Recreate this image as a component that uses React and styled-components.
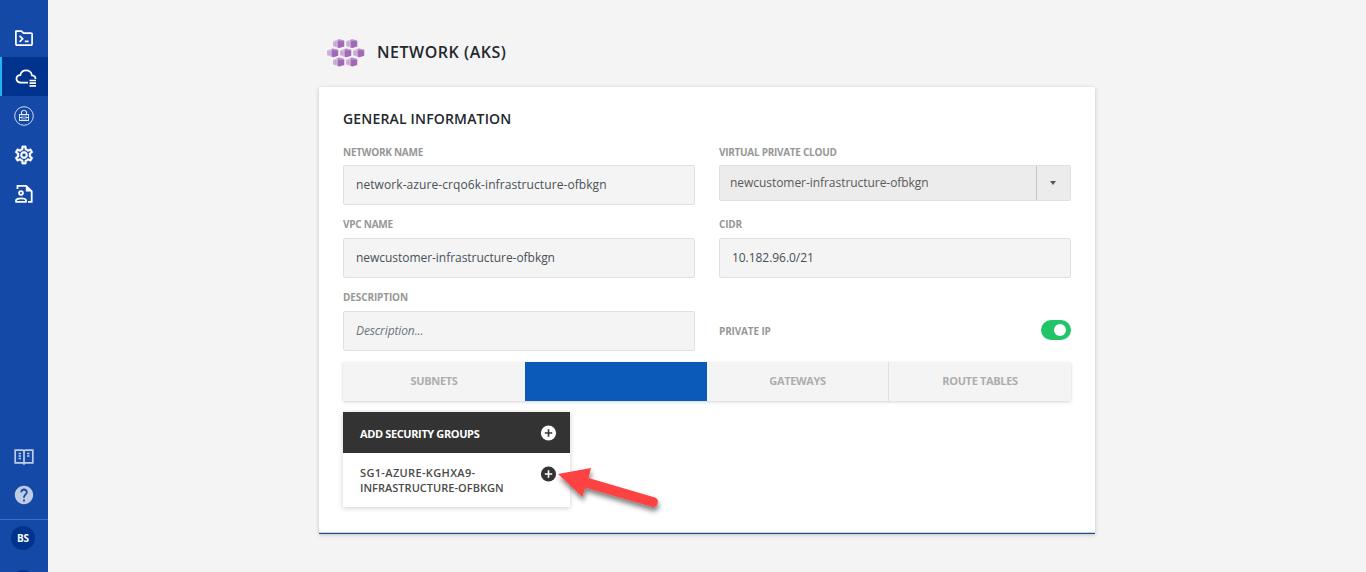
import React from "react";
import styled, { createGlobalStyle } from "styled-components";
import { MdHelp, MdOutlineSettings } from "react-icons/md";

const GlobalStyle = createGlobalStyle`
  * { box-sizing: border-box; }
  body {
    margin: 0;
    overflow: hidden;
    background: #f4f4f4;
    font-family: "Open Sans", "Noto Sans", sans-serif;
  }
`;

const Page = styled.div`
  display: flex;
  height: 572px;
  overflow: hidden;
`;

const Sidebar = styled.nav`
  width: 48px;
  flex: none;
  display: flex;
  flex-direction: column;
  padding-top: 18px;
  background: #1549a8;
  color: #fff;
`;

const NavItem = styled.div`
  height: ${(p) => p.$height || 39}px;
  flex: none;
  display: flex;
  align-items: center;
  justify-content: center;
  background: ${(p) => (p.$active ? "#00338d" : "transparent")};
  border-left: ${(p) => (p.$active ? "2px solid #22b5f5" : "0")};
  padding: ${(p) => (p.$active ? "2px 0 0 2px" : "0")};
  svg { display: block; opacity: ${(p) => (p.$dim ? 0.72 : 1)}; }
`;

const GearIcon = styled(MdOutlineSettings)`
  path:not([fill="none"]) {
    stroke: #fff;
    stroke-width: 0.4px;
  }
`;

const NavBottom = styled.div`
  margin-top: 225px;
  flex: none;
`;

const Account = styled.div`
  margin-top: 5px;
  border-top: 1px solid #3a6fc4;
  padding: 6px 0 0 11px;
  display: flex;
  flex-direction: column;
  gap: 20px;
`;

const Avatar = styled.div`
  width: 24px;
  height: 24px;
  border-radius: 50%;
  background: #00338d;
  font-size: 10px;
  line-height: 24px;
  font-weight: 700;
  letter-spacing: -0.2px;
  text-align: center;
`;

const Main = styled.main`
  width: 776px;
  margin-left: 271px;
  flex: none;
`;

const Header = styled.header`
  display: flex;
  align-items: center;
  gap: 12px;
  height: 87px;
  padding: 18px 0 0 8px;
`;

const Text = styled.span`
  display: block;
  white-space: nowrap;
  letter-spacing: ${(p) => p.$track || 0}px;
`;

const Title = styled(Text)`
  font-size: 16px;
  line-height: 20px;
  font-weight: 600;
  color: #23282d;
  padding-bottom: 2px;
`;

const Card = styled.section`
  height: 447px;
  background: #fff;
  padding: 24px 24px 0;
  border-bottom: 1px solid #134f9c;
  box-shadow: inset 0 -1px 0 #d0d0d0, 0 1px 4px rgba(0, 0, 0, 0.2);
`;

const SectionTitle = styled(Text)`
  font-size: 14px;
  line-height: 16px;
  font-weight: 600;
  color: #23282d;
`;

const Fields = styled.div`
  display: grid;
  grid-template-columns: 352px 352px;
  column-gap: 24px;
  grid-template-rows: 72px 73px 74px;
  margin-top: 19px;
`;

const Field = styled.div`
  display: flex;
  flex-direction: column;
  gap: ${(p) => p.$gap}px;
`;

const Label = styled(Text)`
  font-size: 10px;
  line-height: 13px;
  font-weight: 700;
  color: #979797;
`;

const Input = styled.div`
  height: 40px;
  border: 1px solid #e0e0e0;
  border-radius: 2px;
  background: #f4f4f4;
  padding: 0 12px;
  font-size: 12px;
  line-height: 38px;
  font-style: ${(p) => (p.$placeholder ? "italic" : "normal")};
  color: ${(p) => (p.$placeholder ? "#6c757d" : "#495057")};
`;

const Select = styled.div`
  height: 36px;
  display: flex;
  border: 1px solid #e0e0e0;
  border-radius: 2px;
  background: #ececec;
  font-size: 12px;
  line-height: 34px;
  color: #5a5a5a;
`;

const SelectValue = styled.div`
  flex: 1;
  padding-left: 10px;
`;

const SelectArrow = styled.div`
  width: 34px;
  border-left: 1px solid #c6c6c6;
  display: flex;
  align-items: center;
  justify-content: center;
  padding-right: 1px;
  &::after {
    content: "";
    border: 3.5px solid transparent;
    border-top: 4px solid #555;
    border-bottom: 0;
  }
`;

const SwitchRow = styled.div`
  height: 40px;
  margin-top: 20px;
  display: flex;
  align-items: center;
  justify-content: space-between;
`;

const Switch = styled.div`
  width: 30px;
  height: 20px;
  border-radius: 10px;
  background: #22c468;
  padding: 4px 5px;
  margin-bottom: 2px;
  display: flex;
  justify-content: flex-end;
  &::after {
    content: "";
    width: 12px;
    height: 12px;
    border-radius: 50%;
    background: #fff;
  }
`;

const Tabs = styled.div`
  display: grid;
  grid-template-columns: repeat(4, 1fr);
  height: 39px;
  margin-top: -3px;
  box-shadow: 0 1px 3px rgba(0, 0, 0, 0.18);
`;

const Tab = styled.div`
  background: ${(p) => (p.$active ? "#0b5aba" : "#f4f4f4")};
  border-right: ${(p) => (p.$divided ? "1px solid #e2e2e2" : "0")};
  color: #adadad;
  font-size: 11px;
  line-height: 38px;
  font-weight: 700;
  display: flex;
  justify-content: center;
`;

const Panel = styled.div`
  width: 227px;
  height: 95px;
  margin-top: 11px;
  background: #fff;
  box-shadow: 0 1px 5px rgba(0, 0, 0, 0.2);
`;

const PanelHeader = styled.div`
  height: 41px;
  display: flex;
  align-items: center;
  justify-content: space-between;
  padding: 1px 13px 0 17px;
  background: #333;
  color: #fff;
  font-size: 11px;
  font-weight: 700;
`;

const PanelRow = styled.div`
  display: flex;
  justify-content: space-between;
  align-items: flex-start;
  padding: 12px 13px 0 17px;
  color: #4a4a4a;
  font-size: 11px;
  line-height: 15px;
  font-weight: 600;
  svg { margin-top: 1px; }
`;

const Pointer = styled.svg`
  position: absolute;
  left: 550px;
  top: 456px;
`;

const FolderTerminal = () => (
  <svg width="20" height="18" viewBox="0 0 20 18" fill="none" stroke="#fff" strokeWidth="1.7">
    <path d="M1.9 2.1h5.6l2 2h7.6c.6 0 1 .4 1 1v10c0 .6-.4 1-1 1H2.9c-.6 0-1-.4-1-1z" strokeLinejoin="round" />
    <path d="M5.6 6.8l3.1 3-3.1 3M10.8 12.3h3.8" />
  </svg>
);

const CloudList = () => (
  <svg width="22" height="18" viewBox="0 0 22 18" fill="none" stroke="#fff" strokeWidth="1.8">
    <path d="M13 13.6H5.6C3.2 13.6 1.5 12 1.5 9.9c0-2.2 1.6-3.7 3.8-3.8C6 3.2 8.2 1.4 11 1.4c3 0 5.4 2 5.9 4.9 2 .2 3.6 1.6 3.7 3.7" />
    <path d="M14.5 11.5H21M14.5 14.2H21M14.5 16.9H21" strokeWidth="1.7" />
  </svg>
);

const LockCircle = () => (
  <svg width="20" height="20" viewBox="0 0 20 20" fill="none" stroke="#e2eaf8">
    <circle cx="10" cy="10" r="9.3" strokeWidth="0.9" />
    <path d="M7.5 8V6.5a2.5 2 0 0 1 5 0V8" strokeWidth="1.1" />
    <path d="M5.500 8.500h9M5.500 11.500h3M11.500 11.500h3M5.500 14.500h9M5.500 8v7M14.500 8v7" />
    <path d="M7 10h6M8.500 12h3M7 13h6" stroke="#b4c5e8" strokeWidth="0.8" />
  </svg>
);

const UserDocument = () => (
  <svg width="20" height="20" viewBox="0 0 20 20" fill="none" stroke="#fff" strokeWidth="1.8">
    <path d="M3.5 5V1.9h8.7l5.5 5.4v10.6H14" />
    <path d="M11.8 1.5v6h6z" fill="#fff" stroke="none" />
    <circle cx="7" cy="9" r="1.9" />
    <path d="M2 17.8v-1.3c0-1.3 2.6-2.2 5-2.2s5 .9 5 2.2v1.3z" strokeLinejoin="round" />
  </svg>
);

const OpenBook = () => (
  <svg width="20" height="18" viewBox="0 0 20 18" fill="none" stroke="#fff" strokeWidth="1.7">
    <path d="M1.2 2.2h7.4c.8 0 1.4.5 1.4 1.300 0-.8.6-1.300 1.400-1.300h7.400v12.600h-7.400L10 16l-1.400-1.200H1.200zM10 3v13" />
    <path d="M4.500 5.500H7M4.500 8H7M4.500 10.500H7M13 5.500h2.500M13 8h2.500" strokeWidth="1.500" />
  </svg>
);

const ClusterIcon = () => {
  const cells = [[6, 0], [19, 0], [0, 9.2], [13, 9.2], [26, 9.2], [6, 18.4], [19, 18.4]];
  return (
    <svg width="38" height="28" viewBox="0 0 38 28">
      {cells.map(([x, y]) => (
        <g key={`${x}-${y}`} transform={`translate(${x} ${y})`}>
          <path d="M.2 2L6 .2l5.200 1.300v6L6 9 .2 7.400z" fill="#d9c2e2" />
          <path d="M4.600 2.200L6.200 1.900l5 .2v5.400L6.200 9l-1.600-.6z" fill="#a269b6" />
          <path d="M3.500 1.200L6 .2l5.200 1.300v.9L6 2z" fill="#b98fca" />
          <path d="M1 2.800v4M2.900 2.600v4.800" stroke="#b288c3" strokeWidth=".7" />
        </g>
      ))}
    </svg>
  );
};

const AddIcon = ({ disc, plus }) => (
  <svg width="17" height="16" viewBox="0 0 17 16">
    <circle cx="8.5" cy="8" r="7.6" fill={disc} />
    <path d="M8.5 4.3v7.4M4.8 8h7.4" stroke={plus} strokeWidth="1.6" />
  </svg>
);

export default function App() {
  return (
    <Page>
      <GlobalStyle />
      <Sidebar>
        <NavItem><FolderTerminal /></NavItem>
        <NavItem $active><CloudList /></NavItem>
        <NavItem><LockCircle /></NavItem>
        <NavItem><GearIcon size={22} strokeWidth={0} /></NavItem>
        <NavItem><UserDocument /></NavItem>
        <NavBottom>
          <NavItem $height={38} $dim><OpenBook /></NavItem>
          <NavItem $height={38} $dim><MdHelp size={22} /></NavItem>
          <Account>
            <Avatar>BS</Avatar>
            <Avatar />
          </Account>
        </NavBottom>
      </Sidebar>
      <Main>
        <Header>
          <ClusterIcon />
          <Title $track={0.53}>NETWORK (AKS)</Title>
        </Header>
        <Card>
          <SectionTitle $track={0.17}>GENERAL INFORMATION</SectionTitle>
          <Fields>
            <Field $gap={6}>
              <Label $track={-0.25}>NETWORK NAME</Label>
              <Input><Text $track={0.08}>network-azure-crqo6k-infrastructure-ofbkgn</Text></Input>
            </Field>
            <Field $gap={6}>
              <Label $track={-0.28}>VIRTUAL PRIVATE CLOUD</Label>
              <Select>
                <SelectValue><Text $track={-0.05}>newcustomer-infrastructure-ofbkgn</Text></SelectValue>
                <SelectArrow />
              </Select>
            </Field>
            <Field $gap={7}>
              <Label $track={-0.25}>VPC NAME</Label>
              <Input><Text $track={-0.04}>newcustomer-infrastructure-ofbkgn</Text></Input>
            </Field>
            <Field $gap={7}>
              <Label $track={-0.2}>CIDR</Label>
              <Input><Text $track={-0.05}>10.182.96.0/21</Text></Input>
            </Field>
            <Field $gap={7}>
              <Label $track={-0.12}>DESCRIPTION</Label>
              <Input $placeholder><Text $track={-0.12}>Description...</Text></Input>
            </Field>
            <SwitchRow>
              <Label $track={-0.15}>PRIVATE IP</Label>
              <Switch />
            </SwitchRow>
          </Fields>
          <Tabs>
            <Tab><Text $track={-0.3}>SUBNETS</Text></Tab>
            <Tab $active />
            <Tab $divided><Text $track={-0.35}>GATEWAYS</Text></Tab>
            <Tab><Text $track={-0.35}>ROUTE TABLES</Text></Tab>
          </Tabs>
          <Panel>
            <PanelHeader>
              <Text $track={-0.38}>ADD SECURITY GROUPS</Text>
              <AddIcon disc="#fff" plus="#333" />
            </PanelHeader>
            <PanelRow>
              <div>
                <Text $track={0.35}>SG1-AZURE-KGHXA9-</Text>
                <Text $track={0.03}>INFRASTRUCTURE-OFBKGN</Text>
              </div>
              <AddIcon disc="#333" plus="#fff" />
            </PanelRow>
          </Panel>
        </Card>
      </Main>
      <Pointer width="120" height="65" viewBox="0 0 120 65">
        <defs>
          <filter id="pointer-shadow" x="-20%" y="-20%" width="150%" height="160%">
            <feDropShadow dx="1" dy="4" stdDeviation="2.5" floodColor="#000" floodOpacity=".5" />
          </filter>
        </defs>
        <path
          d="M8 18L41 12 38.5 22 105 41.5A5 5 0 0 1 102.5 51L35 31.5 32.5 41z"
          fill="#fd4343"
          filter="url(#pointer-shadow)"
        />
      </Pointer>
    </Page>
  );
}
